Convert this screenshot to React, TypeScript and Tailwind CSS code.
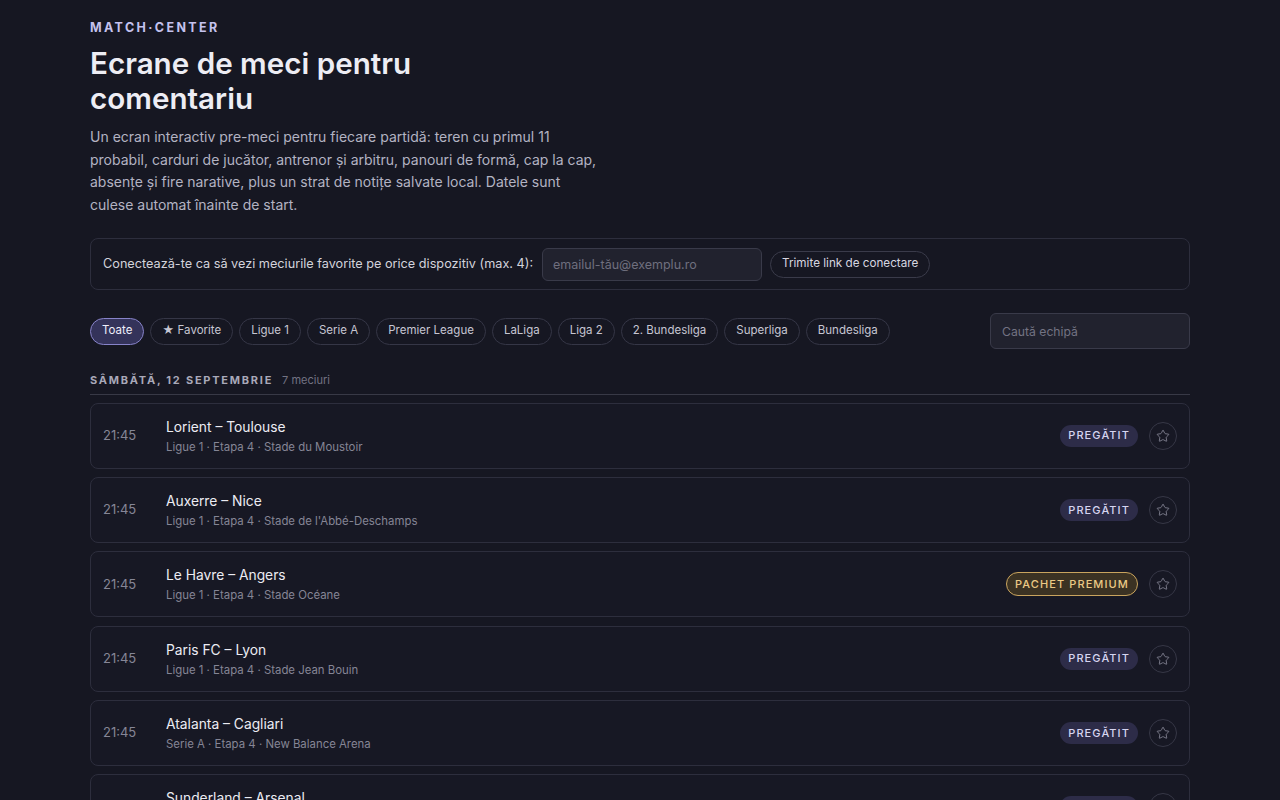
import { Star } from "lucide-react";

type Match = {
  time: string;
  home: string;
  away: string;
  league: string;
  round: string;
  venue: string;
  premium?: boolean;
};

const leagues = [
  "Ligue 1",
  "Serie A",
  "Premier League",
  "LaLiga",
  "Liga 2",
  "2. Bundesliga",
  "Superliga",
  "Bundesliga",
];

const matches: Match[] = [
  { time: "21:45", home: "Lorient", away: "Toulouse", league: "Ligue 1", round: "Etapa 4", venue: "Stade du Moustoir" },
  { time: "21:45", home: "Auxerre", away: "Nice", league: "Ligue 1", round: "Etapa 4", venue: "Stade de l'Abbé-Deschamps" },
  { time: "21:45", home: "Le Havre", away: "Angers", league: "Ligue 1", round: "Etapa 4", venue: "Stade Océane", premium: true },
  { time: "21:45", home: "Paris FC", away: "Lyon", league: "Ligue 1", round: "Etapa 4", venue: "Stade Jean Bouin" },
  { time: "21:45", home: "Atalanta", away: "Cagliari", league: "Serie A", round: "Etapa 4", venue: "New Balance Arena" },
  { time: "22:00", home: "Sunderland", away: "Arsenal", league: "Premier League", round: "Etapa 4", venue: "Stadium of Light" },
  { time: "22:00", home: "Real Sociedad", away: "Getafe", league: "LaLiga", round: "Etapa 4", venue: "Reale Arena" },
];

const MatchRow = ({ match }: { match: Match }) => (
  <div className="flex items-center h-[66px] px-3 rounded-lg border border-[#2d2e3d] bg-[#171824]">
    <span className="w-[63px] shrink-0 text-[13px] text-[#868696]">{match.time}</span>
    <div className="flex-1 min-w-0">
      <p className="text-[13.8px] leading-5 text-[#ececf3]">
        {match.home} – {match.away}
      </p>
      <p className="mt-[2px] text-[11.4px] leading-4 text-[#858595]">
        {match.league} · {match.round} · {match.venue}
      </p>
    </div>
    <div className="flex items-center gap-[11px]">
      {match.premium ? (
        <span className="h-[24px] flex items-center px-[8px] rounded-full border border-[#c9a45e] bg-[#3b3223] text-[11px] font-medium tracking-[0.1em] text-[#ebc985]">
          PACHET PREMIUM
        </span>
      ) : (
        <span className="h-[22px] flex items-center px-[8px] rounded-full bg-[#2d2c48] text-[11px] font-medium tracking-[0.1em] text-[#d6d5f0]">
          PREGĂTIT
        </span>
      )}
      <button className="w-[28px] h-[28px] flex items-center justify-center rounded-full border border-[#363746] text-[#8c8c9c]">
        <Star size={14} strokeWidth={1.4} />
      </button>
    </div>
  </div>
);

export default function App() {
  return (
    <div
      className="min-h-screen bg-[#161722] text-[#e6e6ee]"
      style={{ fontFamily: "Inter, 'Noto Sans', sans-serif" }}
    >
      <div className="max-w-[1100px] mx-auto pt-[20px] pb-10">
        {/* Header */}
        <p className="text-[12.5px] leading-4 font-bold tracking-[0.19em] text-[#c4c2ee]">MATCH·CENTER</p>
        <h1 className="mt-[10px] max-w-[420px] text-[29.6px] leading-[35px] font-semibold text-[#ededf4]">
          Ecrane de meci pentru comentariu
        </h1>
        <p className="mt-[10px] max-w-[510px] text-[14px] leading-[22.5px] text-[#b3b3c2]">
          Un ecran interactiv pre-meci pentru fiecare partidă: teren cu primul 11 probabil, carduri de
          jucător, antrenor și arbitru, panouri de formă, cap la cap, absențe și fire narative, plus un
          strat de notițe salvate local. Datele sunt culese automat înainte de start.
        </p>

        {/* Login */}
        <div className="mt-[22px] h-[52px] flex items-center gap-2 px-3 rounded-lg border border-[#2d2e3d]">
          <span className="text-[12.7px] text-[#d3d3dc]">
            Conectează-te ca să vezi meciurile favorite pe orice dispozitiv (max. 4):
          </span>
          <input
            placeholder="emailul-tău@exemplu.ro"
            className="ml-[1px] w-[220px] h-[33px] px-[10px] rounded-md border border-[#393a49] bg-[#21222e] text-[12.5px] text-[#d3d3dc] placeholder:text-[#6f6f7e] outline-none"
          />
          <button className="h-[27px] px-[11px] rounded-full border border-[#3a3b4a] text-[11.7px] text-[#d6d6e0]">
            Trimite link de conectare
          </button>
        </div>

        {/* Filters */}
        <div className="mt-[23px] flex items-center justify-between">
          <div className="flex items-center gap-[6px]">
            <button className="h-[27px] px-[11px] rounded-full border border-[#8783c9] bg-[#34335a] text-[11.5px] text-[#eeeefa]">
              Toate
            </button>
            <button className="h-[27px] px-[11px] rounded-full border border-[#353646] text-[11.5px] text-[#c6c6d2]">
              ★ Favorite
            </button>
            {leagues.map((l) => (
              <button
                key={l}
                className="h-[27px] px-[11px] rounded-full border border-[#353646] text-[11.5px] text-[#c6c6d2]"
              >
                {l}
              </button>
            ))}
          </div>
          <input
            placeholder="Caută echipă"
            className="w-[200px] h-[36px] px-[11px] rounded-md border border-[#393a49] bg-[#21222e] text-[12.2px] text-[#d3d3dc] placeholder:text-[#737383] outline-none"
          />
        </div>

        {/* Day */}
        <div className="mt-[23px] flex items-baseline gap-[9px] pb-[5px] border-b border-[#383946]">
          <span className="text-[11px] font-bold tracking-[0.16em] text-[#a9a9b9]">
            SÂMBĂTĂ, 12 SEPTEMBRIE
          </span>
          <span className="text-[11px] text-[#737383]">{matches.length} meciuri</span>
        </div>

        <div className="mt-2 flex flex-col gap-[8.4px]">
          {matches.map((m) => (
            <MatchRow key={m.home} match={m} />
          ))}
        </div>
      </div>
    </div>
  );
}
